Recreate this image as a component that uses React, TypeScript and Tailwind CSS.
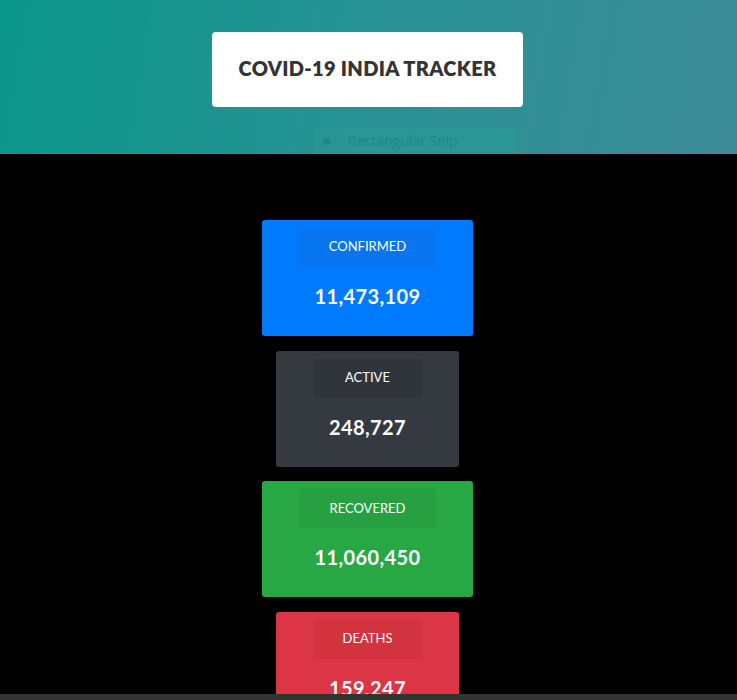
import React from 'react';

type Stat = {
  label: string;
  value: string;
  card: string;
  inner: string;
};

const stats: Stat[] = [
  { label: 'CONFIRMED', value: '11,473,109', card: 'w-[211px] bg-[#007bff]', inner: 'w-[137px] bg-[#0774f0]' },
  { label: 'ACTIVE', value: '248,727', card: 'w-[183px] bg-[#343a40]', inner: 'w-[108px] bg-[#30353b]' },
  { label: 'RECOVERED', value: '11,060,450', card: 'w-[211px] bg-[#28a745]', inner: 'w-[137px] bg-[#27a042]' },
  { label: 'DEATHS', value: '159,247', card: 'w-[183px] bg-[#dc3545]', inner: 'w-[108px] bg-[#d3323f]' },
];

const StatCard: React.FC<{ stat: Stat }> = ({ stat }) => (
  <div className={`${stat.card} h-[116px] rounded-[3px] flex flex-col items-center pt-[8px] shrink-0`}>
    <div className={`${stat.inner} h-[39px] flex items-center justify-center text-white text-[13px] pb-[1px]`}>
      {stat.label}
    </div>
    <div className="mt-[17px] text-white text-[20px] font-bold leading-[24px] tracking-[0.4px]">{stat.value}</div>
  </div>
);

export default function App() {
  return (
    <div className="relative w-[737px] h-[700px] overflow-hidden bg-black font-['Lato','Noto_Sans',sans-serif]">
      <header className="relative w-[735px] h-[154px] bg-[linear-gradient(100deg,#0b978b_0%,#2a9195_55%,#3c8b96_100%)] flex justify-center pt-[32px]">
        <div className="w-[311px] h-[75px] bg-white rounded-[4px] flex items-center justify-center pb-[3px]">
          <h1 className="text-[20px] font-extrabold text-[#343434] tracking-[0.3px]">COVID-19 INDIA TRACKER</h1>
        </div>
        {/* ghost of a snipping-tool tooltip */}
        <div className="absolute left-[314px] top-[128px] w-[202px] h-[26px] flex bg-[#2a9696]">
          <div className="w-[24px] flex items-center justify-center bg-[#279594]">
            <span className="w-[7px] h-[7px] rounded-full bg-[#1d8784]" />
          </div>
          <span className="pl-[10px] text-[14px] leading-[26px] text-[#1e8886] font-['Open_Sans',sans-serif]">Rectangular Snip</span>
        </div>
      </header>
      <div className="absolute top-0 right-0 w-[2px] h-[154px] bg-[#3c8b96]" />
      <main className="w-[735px] flex flex-col items-center gap-[14.7px] pt-[66px]">
        {stats.map((s) => (
          <StatCard key={s.label} stat={s} />
        ))}
      </main>
      <div className="absolute left-0 right-0 bottom-0 h-[6px] bg-[#333333]" />
    </div>
  );
}
